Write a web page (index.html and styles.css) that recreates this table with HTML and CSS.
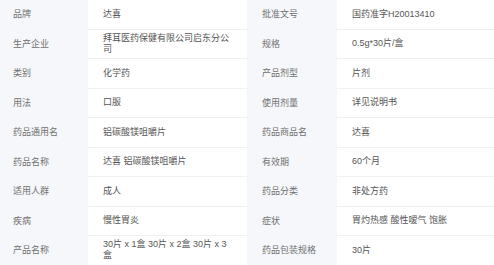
FILE: index.html
```html
<!DOCTYPE html>
<html lang="zh">
<head>
<meta charset="utf-8">
<link rel="stylesheet" href="styles.css">
</head>
<body>
<div class="spec">
  <div class="lbl">品牌</div><div class="val">达喜</div>
  <div class="lbl lbl2">批准文号</div><div class="val">国药准字H20013410</div>

  <div class="lbl">生产企业</div><div class="val">拜耳医药保健有限公司启东分公司</div>
  <div class="lbl lbl2">规格</div><div class="val">0.5g*30片/盒</div>

  <div class="lbl">类别</div><div class="val">化学药</div>
  <div class="lbl lbl2">产品剂型</div><div class="val">片剂</div>

  <div class="lbl">用法</div><div class="val">口服</div>
  <div class="lbl lbl2">使用剂量</div><div class="val">详见说明书</div>

  <div class="lbl">药品通用名</div><div class="val">铝碳酸镁咀嚼片</div>
  <div class="lbl lbl2">药品商品名</div><div class="val">达喜</div>

  <div class="lbl">药品名称</div><div class="val">达喜 铝碳酸镁咀嚼片</div>
  <div class="lbl lbl2">有效期</div><div class="val">60个月</div>

  <div class="lbl">适用人群</div><div class="val">成人</div>
  <div class="lbl lbl2">药品分类</div><div class="val">非处方药</div>

  <div class="lbl">疾病</div><div class="val">慢性胃炎</div>
  <div class="lbl lbl2">症状</div><div class="val">胃灼热感 酸性嗳气 饱胀</div>

  <div class="lbl">产品名称</div><div class="val">30片 x 1盒 30片 x 2盒 30片 x 3盒</div>
  <div class="lbl lbl2">药品包装规格</div><div class="val">30片</div>
</div>
</body>
</html>
```
FILE: styles.css
```css
html, body {
  margin: 0;
  padding: 0;
  background: #ffffff;
}
.spec {
  display: grid;
  grid-template-columns: 88px 159px 90px 157px;
  grid-auto-rows: 29.5px;
  font-family: "Liberation Sans", "Noto Sans CJK SC", sans-serif;
  font-size: 9px;
  line-height: 11px;
}
.lbl, .val {
  display: flex;
  align-items: center;
  box-sizing: border-box;
  overflow: hidden;
}
.lbl {
  background: #f5f7fa;
  color: #707070;
  padding: 0 8px 0 13px;
}
.lbl2 {
  padding-left: 15px;
}
.val {
  color: #555555;
  padding: 0 15px;
  border-bottom: 1px solid #eef0f3;
}
```
